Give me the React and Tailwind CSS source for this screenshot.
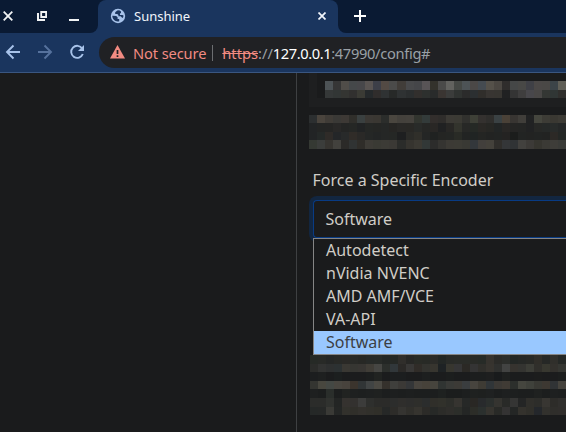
import React from "react";

const cardRows = [
  ["4d5356", "363636", "504d49", "45484a", "47474a", "595452", "3d3f48", "534a44", "4b4b4a", "413d39", "48494b", "454649", "585456", "33322c", "4a4a49", "62625f", "454845", "4d5356", "4b4847", "454b51", "55514a", "4b4742", "2f2d2c", "454747", "484846", "3f4046", "4b4847", "4a4846", "3c4448", "605f57", "23282a"],
  ["353838", "323635", "343532", "31302f", "3b3b35", "25292b", "302d2c", "2f3233", "272928", "2f3233", "2b2e2f", "322f2d", "2d302e", "292b2b", "3a3532", "3b3c3b", "303331", "2b2b2b", "2b2f31", "302e2b", "383532", "373531", "202122", "343434", "3f3e3e", "48474b", "494746", "343734", "303635", "302f2d", "252829"],
];

const descriptionRows = [
  ["2c2f30", "4a443d", "403c37", "3a3936", "3d3935", "302f2b", "3a4040", "3b3834", "3a3732", "2b2d2b", "4a463f", "44413c", "45423d", "32352f", "333b3a", "322e2c", "2f2d2b", "3c3a35", "3b3a34", "31312e", "3e4037", "34312f", "2f2e2c", "3a4143", "4a4137", "383532", "403e3a", "212223", "45463e", "3d3c36", "3a3832", "3d3b35", "3a382f"],
  ["222425", "242524", "252524", "292827", "242524", "252725", "212324", "252725", "252624", "252726", "262523", "292826", "292825", "292b29", "262725", "292725", "202122", "282725", "33342d", "272826", "252925", "2a2825", "272724", "222525", "292725", "252524", "242524", "212223", "272826", "262928", "282b2a", "252727", "2b2a26"],
  ["222425", "252928", "2f2b28", "242628", "282a2a", "302c28", "2a2927", "252726", "232525", "252726", "252725", "1e1f20", "2b2b28", "302f2a", "242625", "202221", "242523", "242624", "292b26", "222423", "202423", "242523", "222322", "222423", "242322", "1b1d1c", "222423", "222322", "222423", "222322", "2c2926", "242725", "232524"],
  ["353933", "3b3d3b", "363430", "42413d", "2b2a28", "303333", "2f2d29", "3d3b36", "3a3a34", "3c3b36", "3b3935", "2b2c2a", "36342f", "3b3933", "323837", "2c2c2b", "353431", "3c3a35", "3c3b35", "393934", "33373b", "423f3c", "44413b", "302e2b", "343638", "303335", "42413e", "3c3a37", "36352f", "3b3a35", "3e3d39", "3a3b38", "3b3934"],
];

const helpRows = [
  ["262a26", "282a27", "252726", "282926", "2a2926", "292a27", "272825", "272a28", "282b28", "242725", "252825", "302e2b", "272725", "292b26", "282a26", "2b2b28", "232725", "292b28", "2a2c28", "2a2c28", "292b27", "272b27", "36332e", "2b2b28", "2c2e2b", "232725", "262826", "282926", "302e29", "262826", "302f2b", "252826"],
  ["2b2c2a", "323332", "2e3030", "2c3132", "3a3833", "363632", "383633", "403d37", "464643", "2c2f2c", "31373a", "2b2927", "383736", "302c28", "33332f", "37352f", "1e2224", "37362f", "353536", "2b2925", "343434", "302f2b", "37342f", "2f302e", "424342", "36332f", "343431", "3c3d37", "302f2b", "383830", "33312d", "353632"],
  ["1c1e1f", "1e2020", "1b1c1d", "1c1f1f", "1b1c1d", "1b1c1d", "1b1c1d", "1c1e1e", "212321", "1b1c1d", "1c1e1f", "1c1e1f", "1b1c1d", "1b1c1d", "1d1f1f", "1b1c1d", "1b1c1d", "1c1e1e", "1b1c1d", "1b1c1d", "1c1e1e", "1c1e1e", "1e1f1f", "191b1c", "1e201f", "1b1c1d", "1b1c1d", "1b1c1d", "1c1d1d", "1b1c1d", "1b1c1d", "1c1e1e"],
  ["343531", "48473f", "444844", "494640", "48433d", "3b342d", "313536", "414444", "4b4943", "35312c", "3f3f3c", "3b3936", "343638", "48443e", "47423a", "46443d", "303432", "393a37", "3c3a36", "3a3d3f", "47443e", "3e3b34", "303538", "3c3935", "403b35", "2c2f2c", "45463f", "3f413b", "393934", "3d3832", "303335", "45433d"],
  ["1e2020", "1c1e1e", "2a2e2b", "1c1e1e", "212321", "1e2020", "1d1f1f", "1e2020", "1f2120", "1c1e1e", "1d1f1f", "1c1e1e", "1d1f1f", "1c1e1e", "1c1e1e", "1c1e1e", "1e2120", "1b1d1d", "1b1d1d", "1d1f1f", "1f2120", "1e201f", "1f2121", "1c1e1e", "1e2020", "1d1f1f", "1c1e1e", "1c1e1e", "1f2120", "1c1e1e", "1e2020", "1d1f1f"],
  ["2b2c2a", "2b2c2a", "30322f", "232524", "35322f", "33312f", "3c3c3b", "2e2f2d", "2b2b29", "2b2b29", "2c2d2c", "2f2e2c", "2d2d2c", "2e2e2b", "2b2d2d", "302f2a", "31312b", "2d2e2a", "363430", "262827", "292724", "282a2c", "2b2f2d", "353430", "292a28", "353534", "242525", "302f2b", "2d2d2a", "383632", "2d2c29", "302f2d"],
  ["252827", "262827", "3a3a36", "242625", "32312c", "302f2a", "33312d", "31302b", "302f29", "262827", "2d2c29", "353431", "302f2b", "36342f", "2c2b28", "272927", "2c2c29", "2f2e2b", "2c2e2a", "242625", "2c2d28", "2b302e", "36342f", "292a27", "343333", "242625", "34322d", "302f2a", "24272b", "32312d", "2f2e2b", "302e2c"],
];

function Mosaic({ rows, heights, wideAt = -1 }) {
  return (
    <div className="overflow-hidden">
      {rows.map((row, r) => (
        <div key={r} className="flex" style={{ height: heights[r] }}>
          {row.map((color, c) => (
            <div
              key={c}
              className="shrink-0"
              style={{ width: c === wideAt ? 9 : 8, backgroundColor: `#${color}` }}
            />
          ))}
        </div>
      ))}
    </div>
  );
}

function TabStrip() {
  return (
    <div className="flex h-[33px] bg-[#0a1a33]">
      <div className="flex w-[90px] shrink-0 items-start">
        <svg width="90" height="33" fill="none" stroke="#f1f3f4">
          <path d="M3.700 11.700l8.600 8.600M12.300 11.700l-8.600 8.600" strokeWidth="1.8" />
          <path d="M41.200 12h4.900v5h-4.900z" strokeWidth="1.800" />
          <path d="M38 13v7h7" strokeWidth="2" />
          <path d="M69 20h10" strokeWidth="2" />
        </svg>
      </div>
      <div className="w-2 shrink-0 bg-[#1a355e]">
        <div className="h-full rounded-br-lg bg-[#0a1a33]" />
      </div>
      <div className="flex w-[240px] shrink-0 rounded-t-lg bg-[#1a355e]">
        <svg className="mt-[8px] ml-[12px]" width="16" height="16" viewBox="0 0 16 16">
          <circle cx="8" cy="8" r="7.2" fill="#a8c3ea" />
          <path
            d="M7.3 2.5 5.2 4.2v1.7h2l1.2 1v1.4h2.2l1 1 1.2.6c.4-.7.7-1.5.7-2.4l-1.2-.5H10V5.2h1V3.4L9.2 2.3ZM2.3 7.8l3.9.1 1.4 1.4v1.6h1.6v2.3c-3.6 1-6.8-1.8-6.9-5.4Z"
            fill="#1a355e"
          />
        </svg>
        <span className="mt-[6px] ml-2 text-[13px] leading-5 text-[#f1f5fb]">Sunshine</span>
        <svg className="mt-[12px] mr-[12px] ml-auto" width="8" height="8" stroke="#f1f5fb" strokeWidth="1.7">
          <path d="M.5.5l7 7M7.5.5l-7 7" />
        </svg>
      </div>
      <div className="w-2 shrink-0 bg-[#1a355e]">
        <div className="h-full rounded-bl-lg bg-[#0a1a33]" />
      </div>
      <svg className="mt-[10px] ml-[8px]" width="12" height="12" stroke="#ffffff" strokeWidth="2">
        <path d="M6 0v12M0 6h12" />
      </svg>
    </div>
  );
}

function Toolbar() {
  return (
    <div className="flex h-10 border-b border-[#3a5680] bg-[#1a355e] pt-1">
      <svg className="shrink-0" width="99" height="31" fill="none" stroke="#a8c3ea" strokeWidth="1.9">
        <path d="M20 15H7M13.5 8.5 7 15l6.5 6.5" />
        <path d="M38 15h13M44.5 8.5 51 15l-6.500 6.500" stroke="#56729d" />
        <path d="M82.200 11.500A6 6 0 1 0 82.800 17" />
        <path d="M84 8v6h-6z" fill="#a8c3ea" stroke="none" />
      </svg>
      <div className="flex h-[31px] flex-1 items-center rounded-l-full bg-[#202124] pl-[11px] whitespace-pre">
        <svg width="15" height="14" viewBox="0 0 15 14" className="mb-px shrink-0">
          <path d="M7.500 0 15 13.500H0z" fill="#f28b82" />
          <path d="M7.500 5v4M7.500 10.200v1.800" stroke="#202124" strokeWidth="1.700" />
        </svg>
        <span className="ml-2 text-[14.670px] leading-5 tracking-[-0.12px] text-[#f28b82]">Not secure</span>
        <span className="ml-[6px] h-4 w-px bg-[#6c6e71]" />
        <span className="ml-[9px] text-[14.670px] leading-5 text-[#9aa0a6]">
          <span className="text-[#f28b82] line-through">https</span>://
          <span className="tracking-[-0.42px] text-white">127.0.0.1</span>
          <span className="tracking-[-0.32px]">:47990/config#</span>
        </span>
      </div>
    </div>
  );
}

function EncoderField() {
  const options = ["Autodetect", "nVidia NVENC", "AMD AMF/VCE", "VA-API", "Software"];
  return (
    <div className="relative ml-4">
      <div className="h-[38px] rounded-l border border-r-0 border-[#083b84] bg-[#1a1b1c] pl-[11.5px] text-base leading-[36px] shadow-[0_0_0_4px_#122640]">
        Software
      </div>
      <div className="absolute top-[38px] left-0 w-full border border-r-0 border-[#858585] bg-[#1a1b1c]">
        {options.map((name) => (
          <div
            key={name}
            className={
              name === "Software"
                ? "h-[23px] bg-[#99c8ff] pl-[12px] text-base leading-[22px] text-[#3c4043]"
                : "h-[23px] pl-[12px] text-base leading-[22px]"
            }
          >
            {name}
          </div>
        ))}
      </div>
    </div>
  );
}

export default function App() {
  return (
    <div className="flex h-[432px] w-[566px] flex-col overflow-hidden bg-[#1a1b1c] font-['Noto_Sans',sans-serif] text-[#d0cdc7]">
      <TabStrip />
      <Toolbar />
      <div className="flex min-h-0 flex-1">
        <div className="w-[297px] shrink-0 border-r border-[#3e4042]" />
        <div className="min-w-0 flex-1 overflow-hidden">
          <div className="ml-3 h-[34px] bg-[#1e1f20] pl-2">
            <div className="h-[25px] bg-[#1a1b1c] pt-2 pl-2">
              <Mosaic rows={cardRows} heights={[9, 8]} wideAt={9} />
            </div>
          </div>
          <div className="mt-2 ml-3">
            <Mosaic rows={descriptionRows} heights={[8, 9, 8, 9]} wideAt={11} />
          </div>
          <div className="mt-[19px] mb-[8px] ml-[15.5px] text-base leading-6">Force a Specific Encoder</div>
          <EncoderField />
          <div className="mt-[117px] ml-[13px]">
            <Mosaic rows={helpRows} heights={[9, 8, 9, 8, 9, 9, 8]} />
          </div>
        </div>
      </div>
    </div>
  );
}
